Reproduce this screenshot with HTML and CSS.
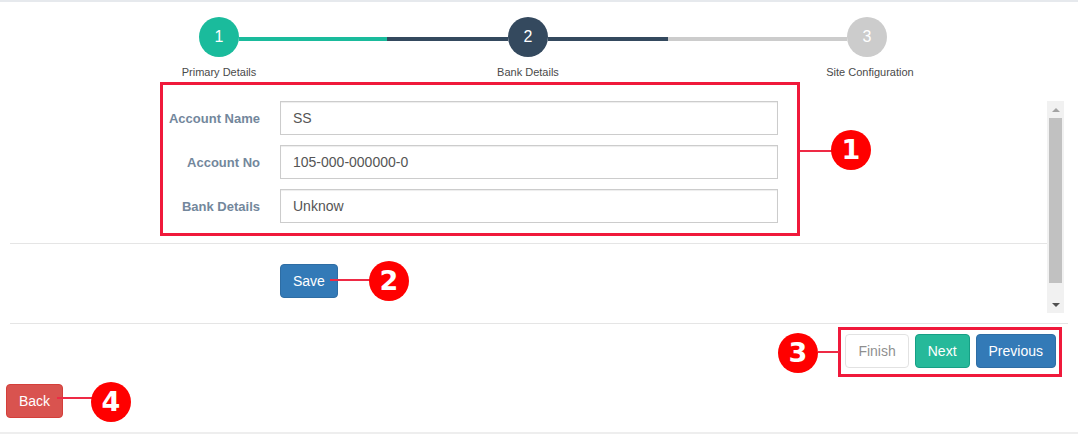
FILE: index.html
```html
<!DOCTYPE html>
<html lang="en">
<head>
<meta charset="utf-8">
<title>Wizard - Bank Details</title>
<link rel="stylesheet" href="styles.css">
</head>
<body>
<div class="page">
  <div class="top-line"></div>

  <div class="wizard">
    <div class="steps-track">
      <div class="step-circle done">1</div>
      <div class="connector conn-1"></div>
      <div class="step-circle current">2</div>
      <div class="connector conn-2"></div>
      <div class="step-circle todo">3</div>
    </div>
    <div class="step-labels">
      <div class="step-label label-1">Primary Details</div>
      <div class="step-label label-2">Bank Details</div>
      <div class="step-label label-3">Site Configuration</div>
    </div>
  </div>

  <div class="scroll-area">
    <div class="scroll-body">
      <form class="form">
        <div class="form-row">
          <label class="form-label">Account Name</label>
          <input class="form-input" type="text" value="SS">
        </div>
        <div class="form-row">
          <label class="form-label">Account No</label>
          <input class="form-input" type="text" value="105-000-000000-0">
        </div>
        <div class="form-row">
          <label class="form-label">Bank Details</label>
          <input class="form-input" type="text" value="Unknow">
        </div>
      </form>
      <div class="divider inner-divider"></div>
      <div class="save-row">
        <button class="btn btn-primary" type="button">Save</button>
      </div>
    </div>
    <div class="scrollbar">
      <div class="sb-btn"><span class="arrow-up"></span></div>
      <div class="sb-track"><div class="sb-thumb"></div></div>
      <div class="sb-btn"><span class="arrow-down"></span></div>
    </div>
  </div>

  <div class="divider outer-divider"></div>

  <div class="actions">
    <button class="btn btn-default disabled" type="button">Finish</button>
    <button class="btn btn-success" type="button">Next</button>
    <button class="btn btn-primary" type="button">Previous</button>
  </div>

  <div class="back-row">
    <button class="btn btn-danger" type="button">Back</button>
  </div>

  <div class="bottom-line"></div>

  <div class="anno-box anno-box-1"></div>
  <div class="anno-line anno-line-1"></div>
  <div class="anno-dot anno-dot-1">1</div>

  <div class="anno-line anno-line-2"></div>
  <div class="anno-dot anno-dot-2">2</div>

  <div class="anno-box anno-box-3"></div>
  <div class="anno-line anno-line-3"></div>
  <div class="anno-dot anno-dot-3">3</div>

  <div class="anno-line anno-line-4"></div>
  <div class="anno-dot anno-dot-4">4</div>
</div>
</body>
</html>
```

FILE: styles.css
```css
* { box-sizing: border-box; }

html, body {
  margin: 0;
  padding: 0;
  background: #fff;
  font-family: "Liberation Sans", Arial, sans-serif;
  font-size: 14px;
  color: #73879C;
}

.page {
  position: relative;
  width: 1078px;
  height: 436px;
  overflow: hidden;
}

.top-line {
  height: 2px;
  background: #e6e9ed;
}

/* wizard steps */
.wizard {
  padding-top: 15px;
}

.steps-track {
  display: flex;
  padding-left: 199px;
  height: 40px;
}

.step-circle {
  width: 40px;
  height: 40px;
  border-radius: 50%;
  color: #fff;
  font-size: 16px;
  display: flex;
  align-items: center;
  justify-content: center;
  flex: none;
}
.step-circle.done { background: #1abb9c; }
.step-circle.current { background: #34495e; }
.step-circle.todo { background: #cccccc; }

.connector {
  height: 4px;
  margin-top: 20px;
  flex: none;
}
.conn-1 {
  width: 269px;
  background: linear-gradient(to right, #1abb9c 0, #1abb9c 148px, #34495e 148px, #34495e 100%);
}
.conn-2 {
  width: 299px;
  background: linear-gradient(to right, #34495e 0, #34495e 120px, #cccccc 120px, #cccccc 100%);
}

.step-labels {
  display: flex;
  padding-left: 159px;
  margin-top: 8px;
  height: 14px;
}
.step-label {
  width: 120px;
  text-align: center;
  font-size: 11px;
  line-height: 14px;
  color: #4a4a4a;
  flex: none;
}
.label-2 { margin-left: 189px; }
.label-3 { margin-left: 222px; }

/* scroll area */
.scroll-area {
  display: flex;
  margin-top: 22px;
  margin-left: 10px;
  width: 1054px;
  height: 212px;
}

.scroll-body {
  flex: 1;
  overflow: hidden;
}

.form-row {
  display: flex;
  align-items: center;
  margin-bottom: 10px;
}
.form-row:last-child { margin-bottom: 0; }

.form-label {
  width: 250px;
  text-align: right;
  font-weight: bold;
  font-size: 13px;
  color: #73879C;
  margin-right: 20px;
}

.form-input {
  width: 498px;
  height: 34px;
  padding: 6px 12px;
  font-family: inherit;
  font-size: 14px;
  color: #555;
  border: 1px solid #ccc;
  border-radius: 0;
  background: #fff;
  box-shadow: inset 0 1px 1px rgba(0,0,0,.075);
}

.divider {
  height: 1px;
  background: #e5e5e5;
}
.inner-divider {
  margin-top: 20px;
}

.save-row {
  padding-top: 20px;
  padding-left: 270px;
  padding-bottom: 40px;
}

/* fake scrollbar */
.scrollbar {
  width: 17px;
  display: flex;
  flex-direction: column;
  background: #f1f1f1;
  flex: none;
}
.sb-btn {
  height: 17px;
  display: flex;
  align-items: center;
  justify-content: center;
}
.sb-track {
  flex: 1;
  padding: 0 2px 13px;
}
.sb-thumb {
  height: 165px;
  background: #c1c1c1;
}
.arrow-up {
  width: 0; height: 0;
  border-left: 4px solid transparent;
  border-right: 4px solid transparent;
  border-bottom: 4px solid #a3a3a3;
}
.arrow-down {
  width: 0; height: 0;
  border-left: 4px solid transparent;
  border-right: 4px solid transparent;
  border-top: 4px solid #505050;
}

.outer-divider {
  margin-top: 10px;
  margin-left: 10px;
  width: 1058px;
}

/* buttons */
.actions {
  display: flex;
  justify-content: flex-end;
  gap: 6px;
  padding-top: 10px;
  padding-right: 22px;
}

.btn {
  display: inline-block;
  height: 34px;
  padding: 6px 12px;
  font-family: inherit;
  font-size: 14px;
  line-height: 20px;
  border: 1px solid transparent;
  border-radius: 4px;
  cursor: pointer;
  color: #fff;
}
.btn-primary { background: #337ab7; border-color: #2e6da4; }
.btn-success { background: #26b99a; border-color: #169f85; }
.btn-danger { background: #d9534f; border-color: #d43f3a; }
.btn-default { background: #fff; border-color: #ccc; color: #333; }
.btn.disabled { opacity: .55; cursor: not-allowed; }

.back-row {
  padding-top: 16px;
  padding-left: 6px;
}

.bottom-line {
  position: absolute;
  left: 0;
  right: 0;
  top: 432px;
  height: 2px;
  background: #eeeeee;
}

/* annotations */
.anno-box {
  position: absolute;
  border: 3px solid #f0193b;
}
.anno-box-1 { left: 160px; top: 82px; width: 640px; height: 154px; }
.anno-box-3 { left: 838px; top: 327px; width: 224px; height: 50px; }

.anno-line {
  position: absolute;
  height: 2px;
  background: #ee2a45;
}
.anno-line-1 { left: 800px; top: 150px; width: 32px; }
.anno-line-2 { left: 330px; top: 279px; width: 40px; }
.anno-line-3 { left: 818px; top: 351px; width: 21px; }
.anno-line-4 { left: 57px; top: 397px; width: 35px; }

.anno-dot {
  position: absolute;
  width: 40px;
  height: 40px;
  border-radius: 50%;
  background: #ff0000;
  color: #fff;
  font-family: "DejaVu Sans", sans-serif;
  font-weight: bold;
  font-size: 27px;
  line-height: 40px;
  text-align: center;
}
.anno-dot-1 { left: 831px; top: 130px; }
.anno-dot-2 { left: 369px; top: 261px; }
.anno-dot-3 { left: 778px; top: 333px; }
.anno-dot-4 { left: 91px; top: 382px; }
```
